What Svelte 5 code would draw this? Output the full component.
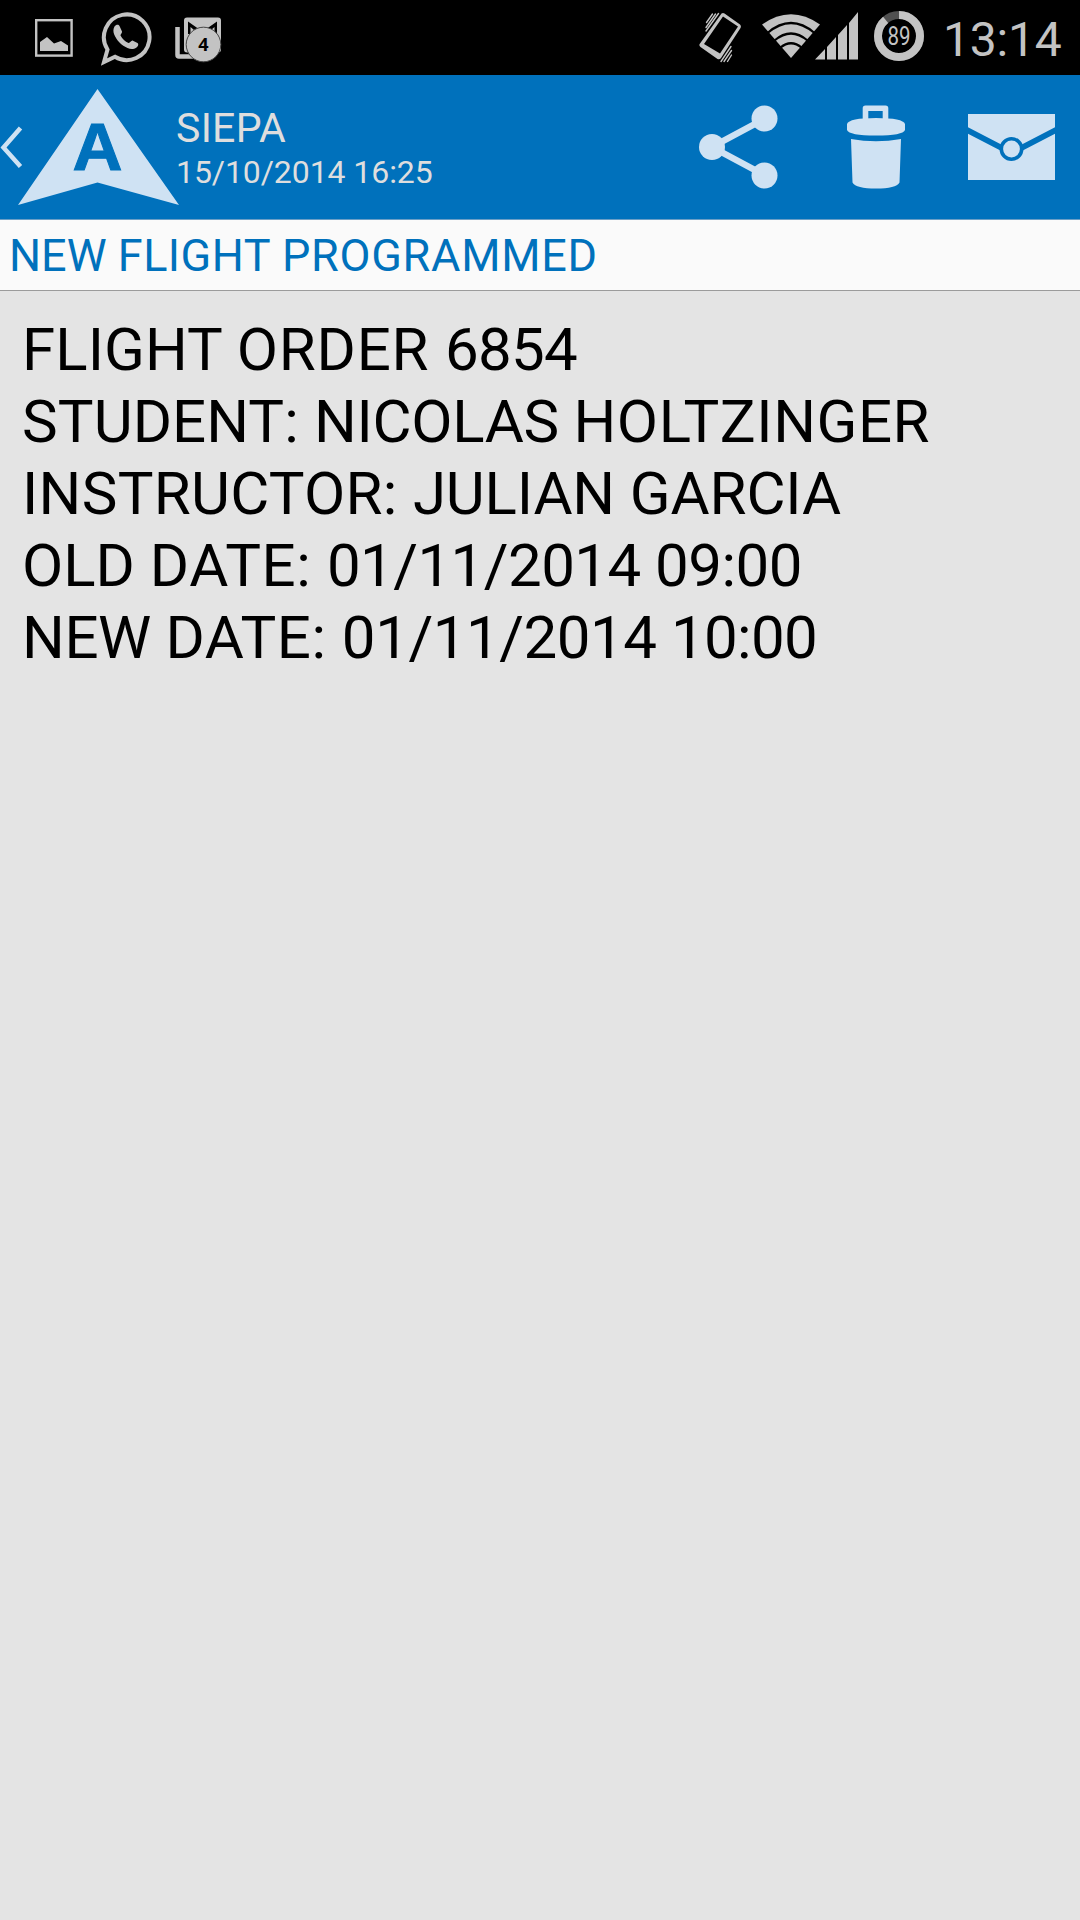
<script>
  const time = '13:14';
  const battery = 89;
  const notifications = 4;
  // every word carries its own tracking in px
  const message = {
    sender: 'SIEPA',
    received: '15/10/2014 16:25',
    title: [['NEW', 0], ['FLIGHT', 0.5], ['PROGRAMMED', 0.75]],
    lines: [
      [['FLIGHT', 0.1], ['ORDER', 0.75], ['6854', -0.7]],
      [['STUDENT:', 0.1], ['NICOLAS', -0.3], ['HOLTZINGER', 0.55]],
      [['INSTRUCTOR:', 0.3], ['JULIAN', -0.17], ['GARCIA', -0.1]],
      [['OLD', 0], ['DATE:', 0.6], ['01/11/2014', -0.55], ['09:00', -0.5]],
      [['NEW', -0.4], ['DATE:', 0.5], ['01/11/2014', -0.45], ['10:00', -0.7]],
    ],
  };
</script>

{#snippet words(list)}
  {#each list as [text, tracking]}<span style="letter-spacing: {tracking}px">{text + ' '}</span>{/each}
{/snippet}

<div class="screen">
  <div class="status">
    <svg class="picture" width="38" height="38" viewBox="0 0 38 38">
      <rect x="1.2" y="1.2" width="35.4" height="35.4" fill="none" stroke="#c3c3c3" stroke-width="2.4" />
      <path d="M5 32V23l7-5 7 6.500 7-2.500 7 4.500V32z" fill="#c3c3c3" />
    </svg>
    <svg class="whatsapp" width="52" height="55" viewBox="0 0 52 55">
      <path d="M7.500 38.500A22.800 22.800 0 1 1 15 45.800L4 51z" fill="none" stroke="#c3c3c3" stroke-width="4" />
      <path
        d="M14.500 15.500c1.500-2 4-2.500 5-.5l2.500 5.500c.5 1.500-2 3-1.500 4 2 3.500 4.500 6 8 7.500 1.500.5 2.500-3 4.500-2.300l4.500 2.300c1.500 1 .5 3.500-1 4.500-3 2-6 1.800-9 .5-6.500-2.800-11-8-13.300-13.500-1-2.800-1.200-5.500.3-8z"
        fill="#c3c3c3" />
    </svg>
    <svg class="mail-badge" width="47" height="46" viewBox="0 0 47 46">
      <path d="M2.500 10v28q0 1.500 1.500 1.500h18" fill="none" stroke="#c3c3c3" stroke-width="4.500" />
      <rect x="9" y="0.500" width="37" height="35" rx="3" fill="#c3c3c3" />
      <path d="M13 17V4.500L23 11.500 19 13l-3.500-3V17zM42 17V4.500L32 11.500 36 13l3.500-3V17z" fill="#000" />
      <circle cx="28.500" cy="27.500" r="17.300" fill="#c3c3c3" stroke="#444" stroke-width="1" />
      <text x="28.500" y="34" text-anchor="middle" class="count">{notifications}</text>
    </svg>

    <svg class="vibrate" width="43" height="51" viewBox="0 0 43 51">
      <path
        fill-rule="evenodd"
        d="M22.500 1.500q1.500-1.200 3 0L41 12.500q1.500 1.500.5 3.500L22 46q-1.500 2-3.500 1L1.500 35q-2-1.500-.5-3.500zM24 4.500L5 32l16 9.500L39 14.500z"
        fill="#c3c3c3" />
      <path
        d="M13.500 2L7.500 10.500M16.500 2L7 15.500M19.500 1.500L7 19M32 34.500L22 49.500M32.500 38.500L25 49.500M32.500 43L28.500 49.500"
        stroke="#c3c3c3"
        stroke-width="1.400"
        stroke-linecap="round" />
    </svg>
    <svg class="wifi" width="58" height="44" viewBox="0 0 58 44">
      <path d="M29 44L0 10.500Q29-10 58 10.500z" fill="#c3c3c3" />
      <path d="M5.500 19Q29-1 52.500 19M12.500 26.500Q29 12.500 45.500 26.500M18 34Q29 24.500 40 34" fill="none" stroke="#000" stroke-width="2.200" />
    </svg>
    <svg class="signal" width="43" height="48" viewBox="0 0 43 48">
      <path d="M0 47.500L10 37v10.500zM12 35l9-10v22.500h-9zM23 23l9-10v34.500h-9zM34 11L43 0v47.500h-9z" fill="#c3c3c3" />
    </svg>
    <svg class="battery" width="50" height="50" viewBox="0 0 50 50">
      <circle cx="25" cy="25" r="21" fill="none" stroke="#505050" stroke-width="8" />
      <circle
        cx="25"
        cy="25"
        r="21"
        fill="none"
        stroke="#c3c3c3"
        stroke-width="8"
        pathLength="100"
        stroke-dasharray="{battery} 100"
        transform="rotate(-90 25 25)" />
      <text x="25" y="34" text-anchor="middle" textLength="23" lengthAdjust="spacingAndGlyphs" class="percent">{battery}</text>
    </svg>
    <span class="time">{time}</span>
  </div>

  <header>
    <svg class="back" width="23" height="43" viewBox="0 0 23 43">
      <path d="M20.500 2L3.500 21.500l17 19" fill="none" stroke="#cfe2f3" stroke-width="4.500" />
    </svg>
    <svg class="logo" width="162" height="117" viewBox="0 0 162 117">
      <path d="M80.500 0L162 116 80.500 93.500 1 116z" fill="#cfe2f3" />
      <text x="55.500" y="80.500" textLength="50" lengthAdjust="spacingAndGlyphs">A</text>
    </svg>
    <div class="heading">
      <div class="sender">{message.sender}</div>
      <div class="received">{message.received}</div>
    </div>
    <div class="actions">
      <svg width="79" height="84" viewBox="0 0 79 84">
        <path d="M66 13.500L13 42l53 28.500" fill="none" stroke="#cfe2f3" stroke-width="6.500" />
        <circle cx="13" cy="42" r="13" fill="#cfe2f3" />
        <circle cx="65.500" cy="13.500" r="13" fill="#cfe2f3" />
        <circle cx="65.500" cy="70.500" r="13" fill="#cfe2f3" />
      </svg>
      <svg width="58" height="84" viewBox="0 0 58 84">
        <path d="M18.500 16V3.200H38.500V16" fill="none" stroke="#cfe2f3" stroke-width="5.600" stroke-linejoin="round" />
        <path d="M0 19Q2 13 29 13t29 6v6q-2 5.500-29 5.500T0 25z" fill="#cfe2f3" />
        <path d="M4 34q25 4.500 50 0l-1.500 43.500Q49 83.500 29 83.500T5.500 77.500z" fill="#cfe2f3" />
      </svg>
      <svg width="87" height="66" viewBox="0 0 87 66">
        <rect width="87" height="66" fill="#cfe2f3" />
        <path d="M-2 15.500L43.500 39 89 15.500" fill="none" stroke="#0071bc" stroke-width="5.800" />
        <circle cx="43.500" cy="35" r="10.200" fill="#cfe2f3" stroke="#0071bc" stroke-width="3.600" />
      </svg>
    </div>
  </header>

  <div class="title">{@render words(message.title)}</div>

  <main>
    {#each message.lines as line}
      <p>{@render words(line)}</p>
    {/each}
  </main>
</div>

<style>
  :global(body) {
    margin: 0;
  }
  .screen {
    width: 1080px;
    height: 1920px;
    display: flex;
    flex-direction: column;
    background-color: #e4e4e4;
    font-family: Roboto, sans-serif;
    overflow: hidden;
  }
  svg {
    display: block;
    flex: none;
  }
  .status {
    box-sizing: border-box;
    height: 75px;
    display: flex;
    align-items: flex-start;
    padding-left: 35px;
    background-color: #000;
    color: #c3c3c3;
  }
  .picture {
    margin-top: 19px;
  }
  .whatsapp {
    margin: 11px 0 0 27px;
  }
  .mail-badge {
    margin: 17px 0 0 23px;
  }
  .count {
    font: bold 18px 'Open Sans', sans-serif;
  }
  .vibrate {
    margin: 12px 0 0 477px;
  }
  .wifi {
    margin: 14px 0 0 20px;
  }
  .signal {
    margin: 12px 0 0 -5px;
  }
  .battery {
    margin: 11px 0 0 16px;
  }
  .percent {
    font: 25px Roboto, sans-serif;
    fill: #c3c3c3;
  }
  .time {
    margin-left: 19px;
    font-size: 48px;
    line-height: 79px;
    letter-spacing: -0.2px;
    white-space: nowrap;
  }
  header {
    box-sizing: border-box;
    height: 145px;
    display: flex;
    align-items: flex-start;
    background-color: #0071bc;
    border-bottom: 1px solid #6c9fc6;
    color: #dedede;
  }
  .back {
    margin: 51px 0 0 0;
  }
  .logo {
    margin: 14px 0 0 -6px;
  }
  .logo text {
    font: bold 66px 'Liberation Sans', sans-serif;
    fill: #0071bc;
    stroke: #0071bc;
    stroke-width: 1px;
  }
  .heading {
    margin: 29px 0 0 -3px;
    white-space: nowrap;
  }
  .sender {
    font-size: 41px;
    line-height: 48px;
    letter-spacing: 0.3px;
  }
  .received {
    font-size: 32px;
    line-height: 40px;
    letter-spacing: -0.08px;
  }
  .actions {
    display: flex;
    align-items: center;
    height: 84px;
    margin: 30px 25px 0 auto;
  }
  .actions svg + svg {
    margin-left: 69px;
  }
  .actions svg + svg + svg {
    margin-left: 63px;
  }
  .title {
    box-sizing: border-box;
    height: 71px;
    padding-left: 9px;
    background-color: #fafafa;
    border-bottom: 1px solid #9b9b9b;
    color: #0071bc;
    font-size: 45px;
    line-height: 71px;
    white-space: pre;
  }
  main {
    padding: 23px 22px;
    color: #000;
    font-size: 60px;
  }
  p {
    margin: 0;
    line-height: 72px;
    white-space: pre;
  }
</style>
